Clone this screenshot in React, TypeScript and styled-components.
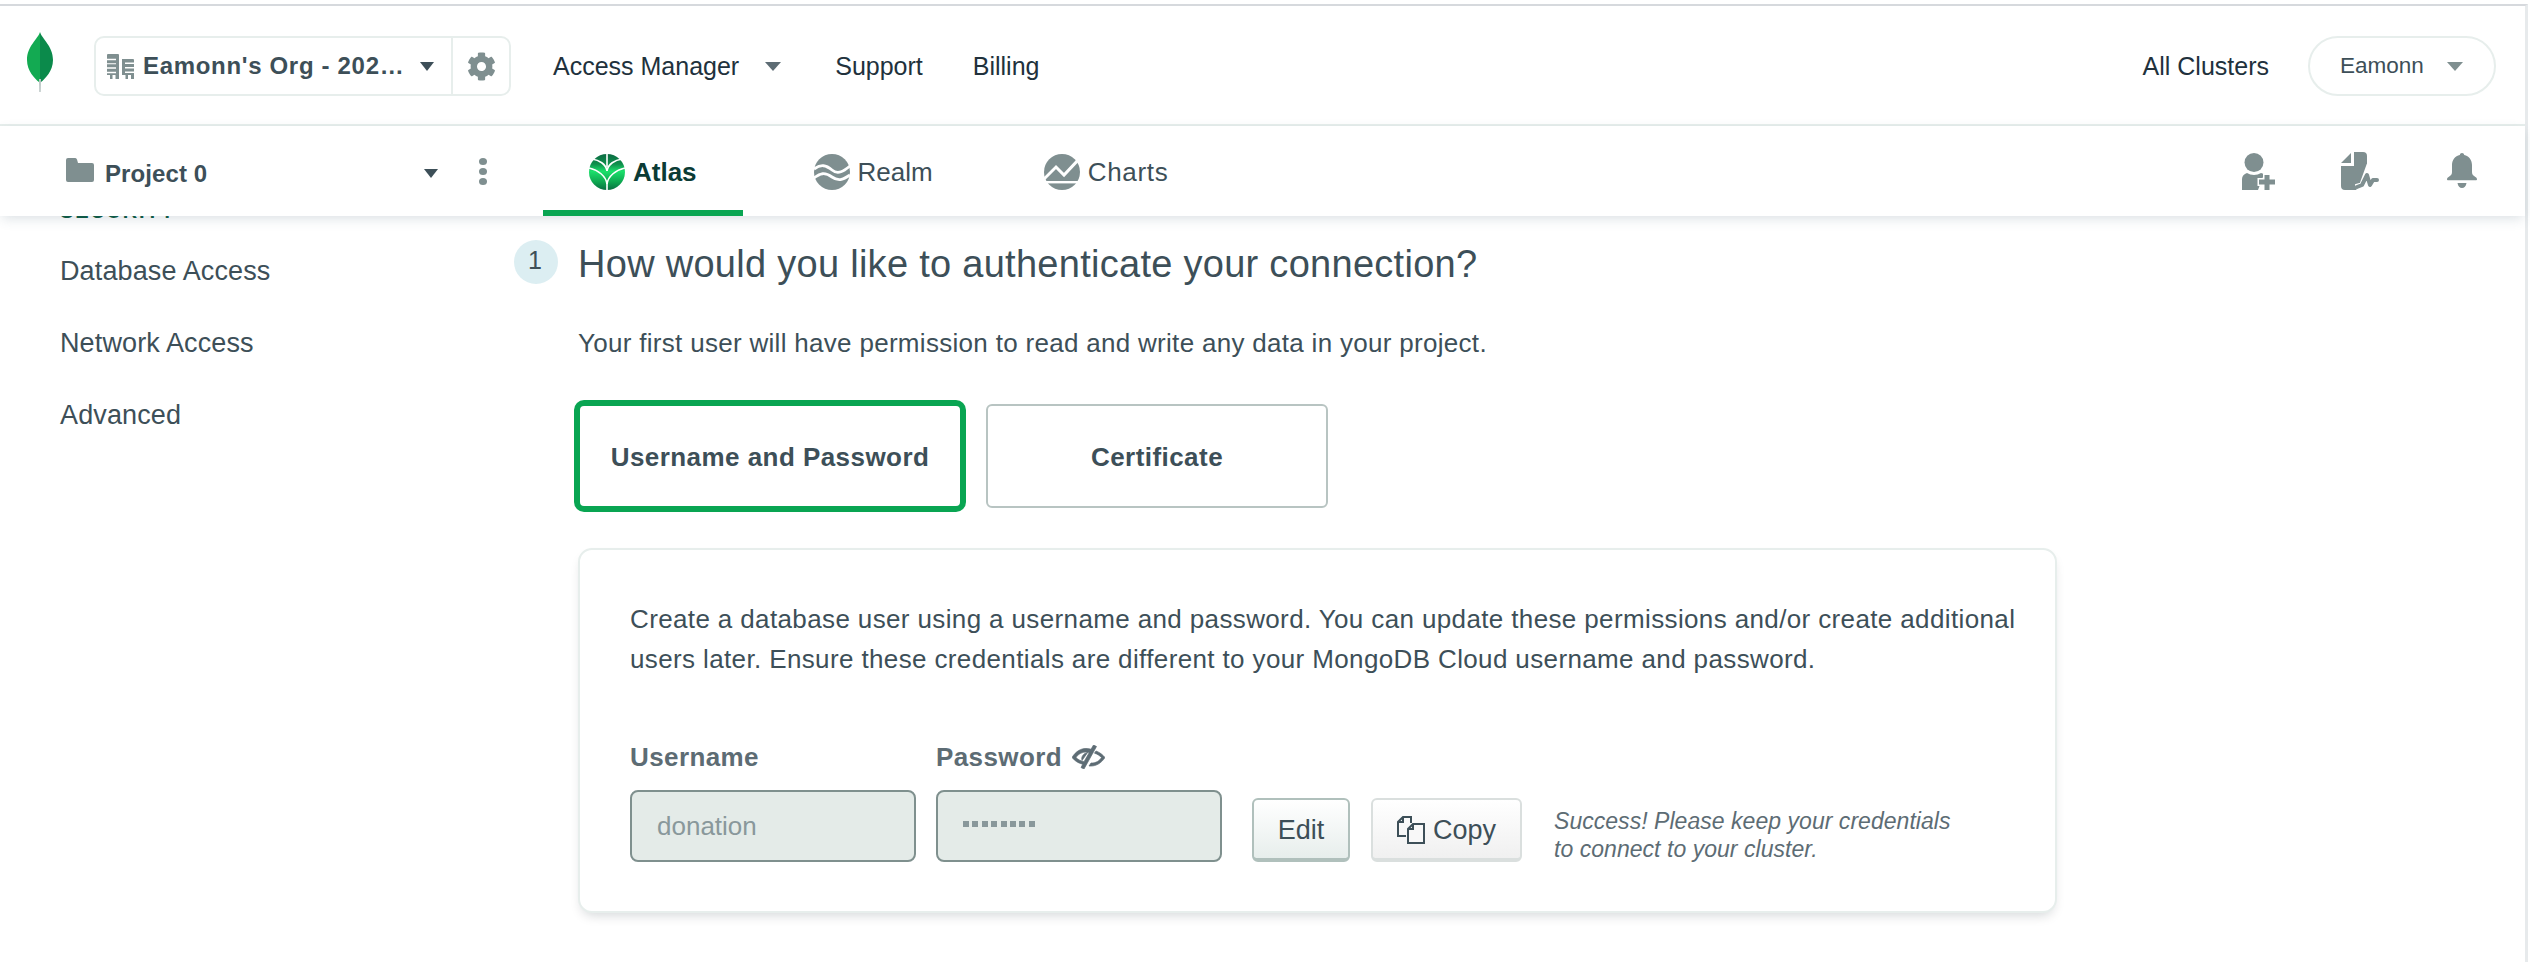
import React from "react";
import styled, { createGlobalStyle } from "styled-components";
import { FaCog } from "react-icons/fa";

const ink = "#21313c";
const slate = "#3d4f58";
const iconGrey = "#7f8f90";
const green = "#09a552";

const GlobalStyle = createGlobalStyle`
  html, body {
    margin: 0;
    background: #fff;
  }

  * {
    box-sizing: border-box;
  }
`;

const Page = styled.div`
  width: 2530px;
  height: 962px;
  padding: 4px 2px 0 0;
  overflow: hidden;
  font-family: "Liberation Sans", Arial, sans-serif;
  color: ${ink};
`;

const Frame = styled.div`
  height: 958px;
  border-top: 2px solid #d6d9dd;
  border-right: 3px solid #e7eaec;
`;

const Header = styled.header`
  display: flex;
  align-items: center;
  height: 120px;
  padding: 2px 29px 0 27px;
  border-bottom: 2px solid #e7eeec;
`;

const Logo = styled.svg`
  width: 26px;
  height: 60px;
  margin: 0 41px 8px 0;
  flex-shrink: 0;
`;

const OrgBox = styled.div`
  display: flex;
  align-items: stretch;
  width: 417px;
  height: 60px;
  border: 2px solid #e7eeec;
  border-radius: 10px;
`;

const OrgName = styled.div`
  flex: 1;
  display: flex;
  align-items: center;
  padding: 0 17px 0 11px;
  border-right: 2px solid #e7eeec;
  font-size: 24px;
  font-weight: 700;
  letter-spacing: 0.68px;
  color: ${slate};
  white-space: nowrap;

  span.name {
    margin-left: 9px;
    flex: 1;
  }
`;

const GearSlot = styled.div`
  width: 56px;
  display: flex;
  align-items: center;
  justify-content: center;
  color: ${iconGrey};
  font-size: 29px;
`;

const Caret = styled.span<{ $color?: string; $wide?: number; $gap?: number }>`
  display: inline-block;
  width: 0;
  height: 0;
  margin-left: ${(p) => p.$gap ?? 0}px;
  border-left: ${(p) => p.$wide ?? 7}px solid transparent;
  border-right: ${(p) => p.$wide ?? 7}px solid transparent;
  border-top: 9px solid ${(p) => p.$color ?? slate};
  flex-shrink: 0;
`;

const TopLink = styled.a<{ $gap?: number; $push?: boolean }>`
  display: flex;
  align-items: center;
  font-size: 25px;
  color: ${ink};
  white-space: nowrap;
  margin-left: ${(p) => (p.$push ? "auto" : `${p.$gap ?? 0}px`)};
`;

const UserPill = styled.div`
  display: flex;
  align-items: center;
  justify-content: space-between;
  width: 188px;
  height: 60px;
  margin-left: 39px;
  padding: 0 31px 0 30px;
  border: 2px solid #e7eeec;
  border-radius: 30px;
  font-size: 22.5px;
  color: ${slate};
`;

const SubNav = styled.nav`
  position: relative;
  z-index: 2;
  display: flex;
  align-items: center;
  height: 90px;
  padding-left: 66px;
  background: #fff;
  box-shadow: 0 4px 12px -2px rgba(60, 90, 110, 0.2);
`;

const ProjectPicker = styled.div`
  display: flex;
  align-items: center;
  width: 372px;
  padding-top: 5px;
  font-size: 24px;
  font-weight: 700;
  letter-spacing: 0.1px;
  color: ${slate};

  span.name {
    margin-left: 11px;
    flex: 1;
  }
`;

const Dots = styled.div`
  display: flex;
  flex-direction: column;
  gap: 3px;
  margin-left: 41px;
  margin-right: 56px;

  i {
    width: 8px;
    height: 7px;
    border-radius: 50%;
    background: ${iconGrey};
  }
`;

const Tabs = styled.div`
  display: flex;
  height: 100%;
`;

const Tab = styled.a<{ $active?: boolean; $gap?: number; $track?: number }>`
  display: flex;
  align-items: center;
  gap: 8px;
  height: 100%;
  margin-left: ${(p) => p.$gap ?? 0}px;
  padding: 8px 46px 0;
  font-size: 26px;
  letter-spacing: ${(p) => p.$track ?? 0}px;
  font-weight: ${(p) => (p.$active ? 700 : 400)};
  color: ${(p) => (p.$active ? "#0b3b35" : slate)};
  border-bottom: 6px solid ${(p) => (p.$active ? green : "transparent")};

  svg {
    width: 36px;
    height: 36px;
    flex-shrink: 0;
  }
`;

const UtilityIcons = styled.div`
  display: flex;
  align-items: center;
  gap: 66px;
  margin-left: auto;
  padding-right: 48px;
`;

const UtilityGlyph = styled.svg<{ $width: number; $height: number; $after?: number }>`
  width: ${(p) => p.$width}px;
  height: ${(p) => p.$height}px;
  margin-right: ${(p) => p.$after ?? 0}px;
  flex-shrink: 0;
`;

const InlineGlyph = styled.svg<{ $drop?: number }>`
  flex-shrink: 0;
  margin-bottom: ${(p) => p.$drop ?? 0}px;
`;

const Body = styled.div`
  display: flex;
`;

const Sidebar = styled.aside`
  width: 514px;
  flex-shrink: 0;
  padding-left: 60px;
`;

const SectionLabel = styled.div`
  margin: -17px 0 12px;
  height: 24px;
  line-height: 24px;
  font-size: 20px;
  font-weight: 700;
  letter-spacing: 1.8px;
  color: #0a5a42;
`;

const SideItem = styled.a`
  display: flex;
  align-items: center;
  height: 72px;
  font-size: 27px;
  letter-spacing: 0.12px;
  color: ${slate};
`;

const Main = styled.main`
  flex: 1;
  padding-top: 24px;
`;

const StepRow = styled.div`
  display: flex;
  align-items: center;
  gap: 20px;
`;

const StepBadge = styled.div`
  width: 44px;
  height: 44px;
  border-radius: 50%;
  background: #dceef2;
  display: flex;
  align-items: center;
  justify-content: center;
  padding: 0 2px 3px 0;
  font-size: 25px;
  color: ${slate};
`;

const Heading = styled.h2`
  margin: 0;
  height: 44px;
  padding-top: 2px;
  font-size: 38px;
  line-height: 44px;
  font-weight: 400;
  letter-spacing: 0.28px;
  color: ${slate};
`;

const StepBody = styled.div`
  padding-left: 60px;
`;

const Intro = styled.p`
  margin: 39px 0 41px 4px;
  font-size: 26px;
  line-height: 40px;
  letter-spacing: 0.3px;
  color: ${slate};
`;

const ChoiceRow = styled.div`
  display: flex;
  gap: 24px;
  padding-left: 4px;
`;

const Choice = styled.button<{ $selected?: boolean; $width: number }>`
  width: ${(p) => p.$width}px;
  height: 104px;
  padding: 2px 0 0;
  background: #fff;
  border: 2px solid ${(p) => (p.$selected ? green : "#b8c4c2")};
  border-radius: 6px;
  box-shadow: ${(p) => (p.$selected ? `0 0 0 4px ${green}` : "none")};
  font-family: inherit;
  font-size: 26px;
  font-weight: 700;
  letter-spacing: 0.45px;
  color: ${slate};
`;

const Card = styled.section`
  width: 1479px;
  height: 365px;
  margin: 40px 0 0 4px;
  padding: 49px 20px 0 50px;
  border: 2px solid #e7eeec;
  border-radius: 14px;
  background: #fff;
  box-shadow: 0 6px 12px -4px rgba(6, 22, 33, 0.18);
`;

const CardText = styled.p`
  margin: 0;
  font-size: 26px;
  line-height: 40px;
  letter-spacing: 0.37px;
  color: ${slate};
  white-space: nowrap;
`;

const FormRow = styled.div`
  display: flex;
  align-items: flex-end;
  margin-top: 63px;
`;

const FieldColumn = styled.div`
  width: 286px;
  margin-right: 20px;
`;

const FieldLabel = styled.label`
  display: flex;
  align-items: center;
  gap: 10px;
  height: 30px;
  margin-bottom: 18px;
  font-size: 26px;
  font-weight: 700;
  letter-spacing: 0.4px;
  color: #5d6c74;
`;

const FieldBox = styled.div`
  display: flex;
  align-items: center;
  height: 72px;
  padding: 0 25px;
  background: #e4ebe8;
  border: 2px solid #7f908e;
  border-radius: 8px;
  font-size: 26px;
  color: #89989b;
`;

const MaskDots = styled.div`
  display: flex;
  gap: 3.4px;
  margin-bottom: 4px;

  i {
    width: 6px;
    height: 6px;
    background: #89989b;
  }
`;

const ActionButton = styled.button<{ $width: number; $tone: "green" | "grey"; $gap: number }>`
  display: flex;
  align-items: center;
  justify-content: center;
  gap: 8px;
  width: ${(p) => p.$width}px;
  height: 64px;
  margin-left: ${(p) => p.$gap}px;
  padding: 2px 0 0;
  flex-shrink: 0;
  border: 2px solid ${(p) => (p.$tone === "green" ? "#b0c0bc" : "#dadfde")};
  border-bottom-width: 4px;
  border-radius: 6px;
  background: linear-gradient(
    #fff,
    ${(p) => (p.$tone === "green" ? "#e7eeec" : "#f0f0f0")}
  );
  font-family: inherit;
  font-size: 27px;
  color: ${slate};
`;

const Notice = styled.p`
  margin: 0 0 -1px 32px;
  font-size: 23px;
  line-height: 28px;
  letter-spacing: 0.04px;
  font-style: italic;
  color: #5d6c74;
  white-space: nowrap;
`;

const BuildingIcon = () => (
  <InlineGlyph width="27" height="25" viewBox="0 0 27 25">
    <path
      fill={iconGrey}
      d="M0 1a1 1 0 0 1 1-1h10a1 1 0 0 1 1 1v24H8.500v-4h-3v4H3v-4H0v-1.800h9v-1.500H0v-3h9v-1.500H0v-3h9V9.200H0v-3h9V4.700H0zM15 5h11a1 1 0 0 1 1 1v2.500h-9V10h9v3h-9v1.500h9v3h-9V19h9v6h-3v-4h-3v4h-2.500v-4H15z"
    />
  </InlineGlyph>
);

const FolderIcon = () => (
  <InlineGlyph width="28" height="24" viewBox="0 0 28 24" $drop={8}>
    <path
      fill={iconGrey}
      d="M0 2a2 2 0 0 1 2-2h7a2 2 0 0 1 2 1.400L12 5h14a2 2 0 0 1 2 2v15a2 2 0 0 1-2 2H2a2 2 0 0 1-2-2z"
    />
  </InlineGlyph>
);

const AtlasIcon = () => (
  <svg viewBox="0 0 36 36">
    <defs>
      <linearGradient id="atlasFill" x1="0" y1="0" x2="0" y2="1">
        <stop offset="0" stopColor="#0b6b43" />
        <stop offset="0.28" stopColor="#0f8f4c" />
        <stop offset="0.48" stopColor="#1be06b" />
        <stop offset="0.78" stopColor="#0ea650" />
        <stop offset="1" stopColor="#0a6f42" />
      </linearGradient>
    </defs>
    <circle cx="18" cy="18" r="18" fill="url(#atlasFill)" />
    <g fill="none" stroke="#fff" strokeWidth="1.6">
      <path d="M18 0v13M18 29v7" />
      <path d="M18 17C17 10 10 6 3 5" />
      <path d="M18 17C19 10 26 6 33 5" />
      <path d="M18 30C17 22 9 16 0 14" />
      <path d="M18 30C19 22 27 16 36 14" />
    </g>
  </svg>
);

const RealmIcon = () => (
  <svg viewBox="0 0 36 36">
    <circle cx="18" cy="18" r="18" fill={iconGrey} />
    <g fill="none" stroke="#fff" strokeWidth="2.8">
      <path d="M0 15C7 10 12 11 18 16S30 17 36 12" />
      <path d="M0 24C6 19 11 18 18 23S30 25 36 21" />
    </g>
  </svg>
);

const ChartsIcon = () => (
  <svg viewBox="0 0 36 36">
    <circle cx="18" cy="18" r="18" fill={iconGrey} />
    <path d="M0 25L12 13L20 21L35 5" fill="none" stroke="#fff" strokeWidth="3" />
    <rect x="0" y="27" width="36" height="2.400" fill="#fff" />
  </svg>
);

const UserPlusIcon = () => (
  <UtilityGlyph viewBox="0 0 33 37" $width={33} $height={37}>
    <circle cx="12" cy="9.500" r="9.500" fill={iconGrey} />
    <path fill={iconGrey} d="M0 26c0-3 2-5 5-6 4 2.500 10 2.500 14 0 1 .2 2 .6 3 1.200L16 37H0z" />
    <path
      fill={iconGrey}
      stroke="#fff"
      strokeWidth="3"
      paintOrder="stroke"
      d="M22.500 22h5v4.500H33v5h-5.500V37h-5v-5.500H17v-5h5.500z"
    />
  </UtilityGlyph>
);

const DocPulseIcon = () => (
  <UtilityGlyph viewBox="0 0 38 38" $width={38} $height={38} $after={2}>
    <path fill={iconGrey} d="M0 11 10 1v10zM13 0h9a4 4 0 0 1 4 4v20l-10 14H4a4 4 0 0 1-4-4V14h13z" />
    <path fill="none" stroke="#fff" strokeWidth="8" d="M15 36l7-2 4-11 4 10 3-5 5 0" />
    <path
      fill="none"
      stroke={iconGrey}
      strokeWidth="4"
      strokeLinecap="round"
      strokeLinejoin="round"
      d="M16 35l5-2 5-10 3 10 3-5h4"
    />
  </UtilityGlyph>
);

const BellIcon = () => (
  <UtilityGlyph viewBox="0 0 30 36" $width={30} $height={36}>
    <path
      fill={iconGrey}
      d="M15 0c1.300 0 2 .9 2.200 2 4.800 1.200 7.800 5 7.800 10v7c0 2 .8 3.500 3.400 5 1.300.8 1.600 1.500 1.600 2.200 0 .6-.5 1-1.200 1H1.200c-.7 0-1.200-.4-1.200-1 0-.7.300-1.400 1.600-2.200C4.200 22.500 5 21 5 19v-7c0-5 3-8.800 7.800-10C13 .9 13.700 0 15 0zM10.500 30h9c-.5 3.500-2.300 5-4.500 5s-4-1.500-4.500-5z"
    />
  </UtilityGlyph>
);

const EyeSlashIcon = () => (
  <InlineGlyph width="33" height="24" viewBox="0 0 33 24">
    <g fill="#5d6c74" stroke="#5d6c74" strokeWidth="0.7">
      <path d="M0 12.500C4 6 9 3.500 14 3.500c2 0 4 .4 5 .8L21.500 0l3 1.500L12 24l-3-1.500 1.700-3.200C6 18 3 16 0 12.500zM14.500 7C10 7 6 9 4 12.500c1.800 1.800 4 3.200 8 4.300l5-8.800-.6-1z" />
      <path d="M24 6c3.500 1.300 6.500 3.500 9 6.500-4 6-9 8.500-14 8.500h-2l2-3c5 .3 8.500-2.300 10.500-5.500-2-2-4-3.400-7-4.300z" />
      <path d="M13 8.500 16 7 10 15.500c-1-3 .5-5.500 3-7z" />
    </g>
  </InlineGlyph>
);

const CopyIcon = () => (
  <svg width="28" height="28" viewBox="0 0 28 28" fill="none" stroke={slate} strokeWidth="2">
    <path d="M9 20H1V6l5-5h8v6" />
    <path d="M6 1v5H1" />
    <path d="M16 8h11v19H11V13z" fill="#f8f8f8" />
    <path d="M16 8v5h-5" />
  </svg>
);

const App: React.FC = () => {
  return (
    <Page>
      <GlobalStyle />
      <Frame>
        <Header>
          <Logo viewBox="0 0 26 60">
            <path fill="#13aa52" d="M13 0C11 7 0 14 0 28c0 11 8 19 12 22l1-1z" />
            <path fill="#0b8a4b" d="M13 0c2 7 13 14 13 28 0 11-8 19-12 22h-1z" />
            <path fill="#b8c4c2" d="M12 47h2l-.3 13h-1.400z" />
          </Logo>
          <OrgBox>
            <OrgName>
              <BuildingIcon />
              <span className="name">Eamonn's Org - 202…</span>
              <Caret />
            </OrgName>
            <GearSlot>
              <FaCog />
            </GearSlot>
          </OrgBox>
          <TopLink $gap={42}>
            Access Manager
            <Caret $color="#5d6c74" $wide={8} $gap={26} />
          </TopLink>
          <TopLink $gap={54}>Support</TopLink>
          <TopLink $gap={50}>Billing</TopLink>
          <TopLink $push>All Clusters</TopLink>
          <UserPill>
            Eamonn
            <Caret $color={iconGrey} $wide={8} />
          </UserPill>
        </Header>
        <SubNav>
          <ProjectPicker>
            <FolderIcon />
            <span className="name">Project 0</span>
            <Caret />
          </ProjectPicker>
          <Dots>
            <i />
            <i />
            <i />
          </Dots>
          <Tabs>
            <Tab $active>
              <AtlasIcon />
              Atlas
            </Tab>
            <Tab $gap={25}>
              <RealmIcon />
              Realm
            </Tab>
            <Tab $gap={19} $track={0.7}>
              <ChartsIcon />
              Charts
            </Tab>
          </Tabs>
          <UtilityIcons>
            <UserPlusIcon />
            <DocPulseIcon />
            <BellIcon />
          </UtilityIcons>
        </SubNav>
        <Body>
          <Sidebar>
            <SectionLabel>SECURITY</SectionLabel>
            <SideItem>Database Access</SideItem>
            <SideItem>Network Access</SideItem>
            <SideItem>Advanced</SideItem>
          </Sidebar>
          <Main>
            <StepRow>
              <StepBadge>1</StepBadge>
              <Heading>How would you like to authenticate your connection?</Heading>
            </StepRow>
            <StepBody>
              <Intro>
                Your first user will have permission to read and write any data in your project.
              </Intro>
              <ChoiceRow>
                <Choice $selected $width={384}>
                  Username and Password
                </Choice>
                <Choice $width={342}>Certificate</Choice>
              </ChoiceRow>
              <Card>
                <CardText>
                  Create a database user using a username and password. You can update these
                  permissions and/or create additional
                  <br />
                  users later. Ensure these credentials are different to your MongoDB Cloud
                  username and password.
                </CardText>
                <FormRow>
                  <FieldColumn>
                    <FieldLabel>Username</FieldLabel>
                    <FieldBox>donation</FieldBox>
                  </FieldColumn>
                  <FieldColumn>
                    <FieldLabel>
                      Password
                      <EyeSlashIcon />
                    </FieldLabel>
                    <FieldBox>
                      <MaskDots>
                        {Array.from({ length: 8 }, (_, i) => (
                          <i key={i} />
                        ))}
                      </MaskDots>
                    </FieldBox>
                  </FieldColumn>
                  <ActionButton $width={98} $tone="green" $gap={10}>
                    Edit
                  </ActionButton>
                  <ActionButton $width={151} $tone="grey" $gap={21}>
                    <CopyIcon />
                    Copy
                  </ActionButton>
                  <Notice>
                    Success! Please keep your credentials
                    <br />
                    to connect to your cluster.
                  </Notice>
                </FormRow>
              </Card>
            </StepBody>
          </Main>
        </Body>
      </Frame>
    </Page>
  );
};

export default App;
